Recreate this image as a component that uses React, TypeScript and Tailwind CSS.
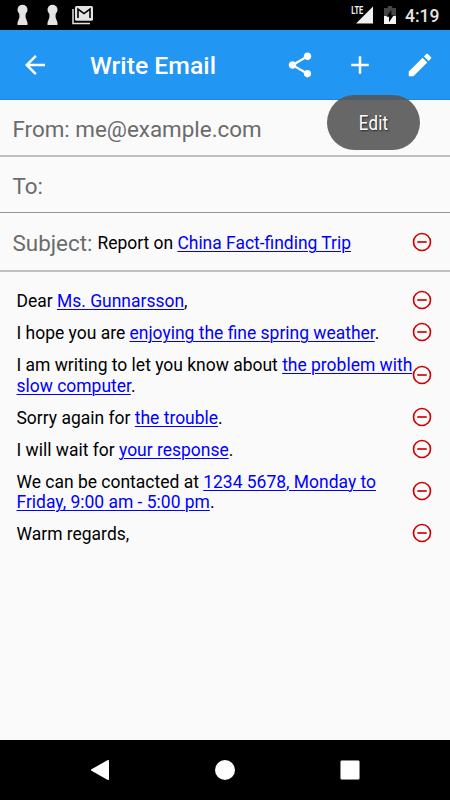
import type { ReactNode } from 'react'

const LINES = [
  { before: 'Dear ', link: 'Ms. Gunnarsson', after: ',' },
  { before: 'I hope you are ', link: 'enjoying the fine spring weather', after: '.' },
  { before: 'I am writing to let you know about ', link: 'the problem with slow computer', after: '.' },
  { before: 'Sorry again for ', link: 'the trouble', after: '.' },
  { before: 'I will wait for ', link: 'your response', after: '.' },
  { before: 'We can be contacted at ', link: '1234 5678, Monday to Friday, 9:00 am - 5:00 pm', after: '.' },
  { before: 'Warm regards,', link: '', after: '' },
]

function Icon({ d, className }: { d: string; className: string }) {
  return (
    <svg viewBox="0 0 24 24" fill="currentColor" className={`shrink-0 ${className}`}>
      <path d={d} />
    </svg>
  )
}

function Keyhole() {
  return (
    <svg viewBox="0 0 12 22" fill="#e4e4e4" className="h-[22px] w-3 shrink-0">
      <circle cx="6.5" cy="5.8" r="5" />
      <path d="M3.4 8h6.2v5.5l1.9 5V21h-10v-2.5l1.9-5z" />
    </svg>
  )
}

function StatusBar() {
  return (
    <div className="flex h-[30px] items-center bg-black pl-4 pr-2.5 text-[#e4e4e4]">
      <div className="flex flex-1 items-center">
        <Keyhole />
        <div className="w-[18px]" />
        <Keyhole />
        <svg viewBox="0 0 22 20" className="ml-3.5 h-5 w-[22px]" fill="none">
          <path d="M1 4v14.5h17" stroke="#e4e4e4" strokeWidth="1.5" />
          <rect x="3" y="1" width="18" height="14.7" rx="1.5" fill="#e4e4e4" />
          <path d="M6 13V4l6 4.6L18 4v9" stroke="#000" strokeWidth="1.6" />
        </svg>
      </div>
      <svg viewBox="0 0 24 20" className="h-5 w-6">
        <path d="M23 1.5v17H6z" fill="#f0f0f0" />
        <text x="1.3" y="9" fontSize="10" fontWeight="700" textLength="12" lengthAdjust="spacingAndGlyphs" fill="#f0f0f0" stroke="#000" strokeWidth="2" paintOrder="stroke" fontFamily="Roboto, sans-serif">
          LTE
        </text>
      </svg>
      <svg viewBox="0 0 12 20" className="ml-2.5 h-5 w-3">
        <path d="M3.8 1h4.4v2H12v8H0V3h3.8z" fill="#464646" />
        <path d="M0 11h12v8H0z" fill="#f4f4f4" />
        <path d="M7.3 5v5.2h2.4L5 17.2v-5.4H2.5z" fill="#000" />
      </svg>
      <span className="ml-[9px] w-[35px] whitespace-nowrap pt-px text-[17.5px] font-medium leading-[30px]">4:19</span>
    </div>
  )
}

function AppBar() {
  return (
    <header className="relative flex h-[70px] items-center border-b border-[#1b87df] bg-[#2196f3] pl-5 pr-[15px] text-white">
      <Icon className="size-[30px]" d="M20 11H7.83l5.59-5.59L12 4l-8 8 8 8 1.41-1.41L7.83 13H20v-2z" />
      <h1 className="ml-10 flex-1 pt-[3px] text-[24.8px] font-medium leading-[30px]">Write Email</h1>
      <div className="flex gap-[30px]">
        <Icon
          className="size-[30px]"
          d="M18 16.08c-.76 0-1.44.3-1.96.77L8.91 12.7c.05-.23.09-.46.09-.7s-.04-.47-.09-.7l7.05-4.11c.54.5 1.25.81 2.04.81 1.66 0 3-1.34 3-3s-1.34-3-3-3-3 1.34-3 3c0 .24.04.47.09.7L8.04 9.81C7.5 9.31 6.79 9 6 9c-1.66 0-3 1.34-3 3s1.34 3 3 3c.79 0 1.5-.31 2.04-.81l7.12 4.16c-.05.21-.08.43-.08.65 0 1.61 1.31 2.92 2.92 2.92s2.92-1.31 2.92-2.92-1.31-2.92-2.92-2.92z"
        />
        <Icon className="size-[30px]" d="M19 13h-6v6h-2v-6H5v-2h6V5h2v6h6v2z" />
        <Icon
          className="size-[30px]"
          d="M3 17.25V21h3.75L17.81 9.94l-3.75-3.75L3 17.25zM20.71 7.04c.39-.39.39-1.02 0-1.41l-2.34-2.34c-.39-.39-1.02-.39-1.41 0l-1.83 1.83 3.75 3.75 1.83-1.83z"
        />
      </div>
      <div className="absolute right-[30px] top-[65px] z-10 flex h-[55px] w-[93px] items-center justify-center rounded-full bg-[#575757]/90 pt-px text-white">
        <span className="inline-block scale-x-[.84] text-[20px] tracking-[.3px] [text-shadow:1px_1px_2px_#222]">Edit</span>
      </div>
    </header>
  )
}

function RemoveButton() {
  return (
    <button type="button" aria-label="Remove" className="shrink-0 text-[#cc0000]">
      <svg viewBox="1.4 1.4 21.2 21.2" fill="none" stroke="currentColor" strokeWidth="1.75" className="size-5">
        <circle cx="12" cy="12" r="9" />
        <path d="M7 12h10" />
      </svg>
    </button>
  )
}

function Blank({ children }: { children: ReactNode }) {
  return <a className="text-[#0000ff] underline decoration-1 underline-offset-2">{children}</a>
}

export default function App() {
  return (
    <div className="flex h-[800px] w-[450px] flex-col overflow-hidden bg-[#fafafa] text-black [font-family:Roboto,sans-serif]">
      <StatusBar />
      <AppBar />

      <section className="text-[22.4px] text-[#6b6b6b]">
        <div className="flex h-[57px] items-center border-b-2 border-[#c0c0c0] pl-[12.5px] pt-1">From: me@example.com</div>
        <div className="flex h-14 items-center border-b border-[#969696] pl-[12.5px] pt-1">To:</div>
        <div className="flex h-[59px] items-center border-b-2 border-[#c0c0c0] pl-[12.5px] pr-[18px] pt-px">
          <span className="pt-[3px]">Subject:</span>
          <p className="ml-[5px] flex-1 pt-0.5 text-[17.46px] text-black">
            Report on <Blank>China Fact-finding Trip</Blank>
          </p>
          <RemoveButton />
        </div>
      </section>

      <main className="flex-1 pt-[12.3px]">
        {LINES.map((line) => (
          <div key={line.before} className="flex items-center pl-[16.5px] pr-[18px]">
            <p className="-mr-1 flex-1 pb-[4.6px] pt-[6.8px] text-[17.48px] leading-[20.6px]">
              {line.before}
              {line.link && <Blank>{line.link}</Blank>}
              {line.after}
            </p>
            <RemoveButton />
          </div>
        ))}
      </main>

      <nav className="flex h-[60px] items-center justify-between bg-black px-[90px] text-white">
        <svg viewBox="0 0 20 22" className="h-[22px] w-5" fill="currentColor">
          <path d="M17.8 1.1c.7-.4 1.2 0 1.2.7v18.4c0 .7-.5 1.1-1.2.7L1.5 11.8c-.7-.4-.7-1.2 0-1.6z" />
        </svg>
        <div className="size-5 rounded-full bg-white" />
        <div className="size-5 rounded-[2px] border border-[#888] bg-white" />
      </nav>
    </div>
  )
}
